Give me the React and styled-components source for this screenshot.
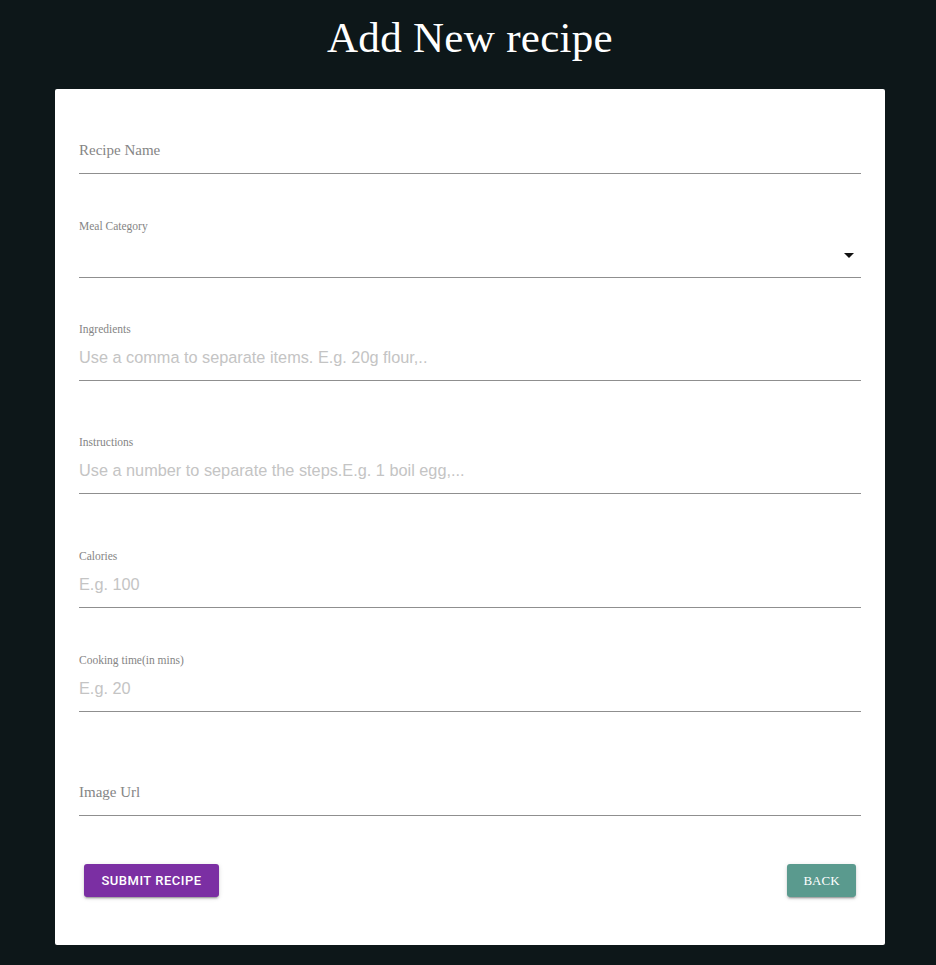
import styled, { createGlobalStyle } from "styled-components";

const fields = [
    { label: "Recipe Name", shrink: false, gap: 0 },
    { label: "Meal Category", shrink: true, select: true, gap: 46 },
    { label: "Ingredients", shrink: true, placeholder: "Use a comma to separate items. E.g. 20g flour,..", gap: 45 },
    { label: "Instructions", shrink: true, placeholder: "Use a number to separate the steps.E.g. 1 boil egg,...", gap: 55 },
    { label: "Calories", shrink: true, placeholder: "E.g. 100", gap: 56 },
    { label: "Cooking time(in mins)", shrink: true, placeholder: "E.g. 20", gap: 46 },
    { label: "Image Url", shrink: false, gap: 46 },
];

export default function App(){
    return(
    <>
        <GlobalStyle/>
        <Page>
            <Title>Add New recipe</Title>
            <Card>
                {fields.map((f) =>
                    <Field key={f.label} gap={f.gap}>
                        <SmallLabel>{f.shrink ? f.label : ""}</SmallLabel>
                        <InputRow>
                            {f.shrink ? <Input placeholder={f.placeholder || ""} readOnly={f.select}/> : <BigLabel>{f.label}</BigLabel>}
                            {f.select &&
                                <Arrow viewBox="0 0 24 24" width="24" height="24">
                                    <path d="M7 10l5 5 5-5z" fill="#111"/>
                                </Arrow>}
                        </InputRow>
                    </Field>
                )}
                <Buttons>
                    <Submit>Submit recipe</Submit>
                    <Back>Back</Back>
                </Buttons>
            </Card>
        </Page>
    </>
    )
}

const GlobalStyle = createGlobalStyle`
    body{
        margin: 0;
        background: #0d1719;
        font-family: "Liberation Serif", serif;
    }
`

const Page = styled.div`
    min-height: 965px;
    padding-left: 4px;
    display: flex;
    flex-direction: column;
    align-items: center;
`

const Title = styled.h1`
    margin: 14px 0 0;
    height: 75px;
    color: #fff;
    font-weight: 400;
    font-size: 43px;
    line-height: 48px;
    letter-spacing: 0.3px;
`

const Card = styled.div`
    width: 830px;
    box-sizing: border-box;
    background: #fff;
    border-radius: 2px;
    padding: 27px 24px 48px;
    display: flex;
    flex-direction: column;
`

const Field = styled.div`
    margin-top: ${(p) => p.gap}px;
    display: flex;
    flex-direction: column;
`

const SmallLabel = styled.div`
    height: 16px;
    line-height: 13px;
    font-size: 11.5px;
    color: #858585;
`

const InputRow = styled.div`
    height: 42px;
    box-sizing: border-box;
    border-bottom: 1px solid #8f8f8f;
    padding-bottom: 13px;
    display: flex;
    align-items: flex-end;
`

const Input = styled.input`
    flex: 1;
    border: none;
    outline: none;
    padding: 0;
    height: 20px;
    line-height: 20px;
    font-family: "Liberation Sans", Arial, sans-serif;
    font-size: 16.3px;
    background: transparent;
    &::placeholder{
        color: #c4c4c4;
    }
`

const BigLabel = styled.span`
    height: 20px;
    line-height: 20px;
    font-size: 15px;
    color: #858585;
`

const Arrow = styled.svg`
    margin-bottom: -3px;
    flex-shrink: 0;
`

const Buttons = styled.div`
    margin-top: 48px;
    padding: 0 5px;
    display: flex;
    justify-content: space-between;
    align-items: center;
`

const Submit = styled.button`
    width: 135px;
    height: 33px;
    border: none;
    border-radius: 3px;
    background: #7b2fa3;
    color: #fff;
    font-family: Roboto, "Liberation Sans", sans-serif;
    font-weight: 500;
    font-size: 13px;
    letter-spacing: 0.5px;
    text-transform: uppercase;
    box-shadow: 0 3px 1px -2px rgba(0,0,0,0.2), 0 2px 2px 0 rgba(0,0,0,0.14), 0 1px 5px 0 rgba(0,0,0,0.12);
`

const Back = styled.button`
    width: 69px;
    height: 33px;
    border: none;
    border-radius: 3px;
    background: #5a9a8e;
    color: #fff;
    font-family: "Liberation Serif", serif;
    font-size: 13px;
    text-transform: uppercase;
    box-shadow: 0 3px 1px -2px rgba(0,0,0,0.2), 0 2px 2px 0 rgba(0,0,0,0.14), 0 1px 5px 0 rgba(0,0,0,0.12);
`
